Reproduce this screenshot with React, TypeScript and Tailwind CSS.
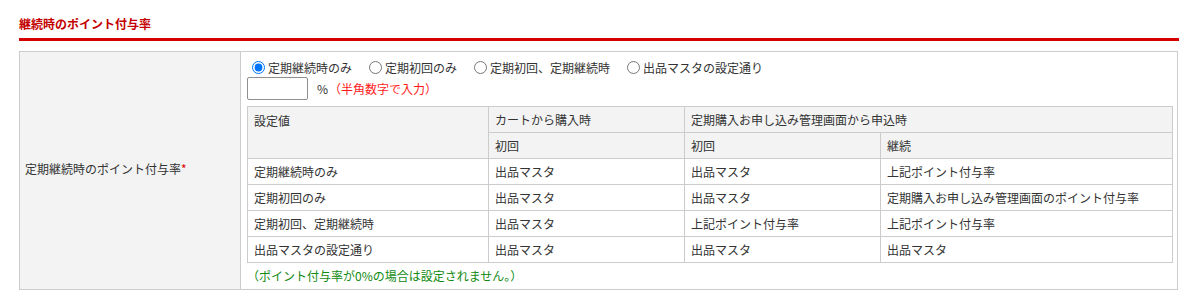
import { useState } from 'react';

const options = ['定期継続時のみ', '定期初回のみ', '定期初回、定期継続時', '出品マスタの設定通り'];

const rows = [
    ['定期継続時のみ', '出品マスタ', '出品マスタ', '上記ポイント付与率'],
    ['定期初回のみ', '出品マスタ', '出品マスタ', '定期購入お申し込み管理画面のポイント付与率'],
    ['定期初回、定期継続時', '出品マスタ', '上記ポイント付与率', '上記ポイント付与率'],
    ['出品マスタの設定通り', '出品マスタ', '出品マスタ', '出品マスタ'],
];

export default function App() {
    const [selected, setSelected] = useState(0);

    return (
        <div
            className="w-[1198px] h-[304px] bg-white px-[19px] pt-[16px] text-[12px] text-[#333]"
            style={{ fontFamily: '"Noto Sans CJK JP", "Liberation Sans", sans-serif' }}
        >
            {/* section heading */}
            <h2 className="text-[12px] leading-[16px] font-bold text-[#c40000] pb-[6px] border-b-[3px] border-[#d40000]">
                継続時のポイント付与率
            </h2>

            <table className="mt-[10px] w-[1159px] border-collapse table-fixed">
                <tbody>
                    <tr>
                        <th className="w-[221px] bg-[#f2f3f2] border border-[#cccccc] px-[5px] pb-[4px] text-left align-middle font-normal">
                            定期継続時のポイント付与率<span className="text-[#e00000]">*</span>
                        </th>
                        <td className="border border-[#cccccc] px-[6px] pt-[6px] align-top">
                            <div className="flex items-center h-[19px] leading-[19px]">
                                {options.map((label, i) => (
                                    <label key={label} className="flex items-center mr-[12px]">
                                        <input
                                            type="radio"
                                            name="pointRate"
                                            checked={selected === i}
                                            onChange={() => setSelected(i)}
                                            className="m-0 ml-[5px] mr-[3px] w-[13px] h-[13px] accent-[#0075ff]"
                                        />
                                        {label}
                                    </label>
                                ))}
                            </div>
                            <div className="flex items-center h-[23px]">
                                <input
                                    type="text"
                                    className="w-[61px] h-[23px] border border-[#8f8f8f] rounded-[2px] px-1 outline-none"
                                />
                                <span className="ml-[9px]">%</span>
                                <span className="ml-[1px] text-[#ff1a1a]">（半角数字で入力）</span>
                            </div>

                            <table className="mt-[6px] w-[925px] border-collapse table-fixed">
                                <colgroup>
                                    <col className="w-[241px]" />
                                    <col className="w-[196px]" />
                                    <col className="w-[196px]" />
                                    <col className="w-[292px]" />
                                </colgroup>
                                <thead>
                                    <tr className="h-[26px] bg-[#f2f3f2]">
                                        <th rowSpan={2} className="border border-[#cccccc] px-[6px] pt-[5px] text-left align-top font-normal">
                                            設定値
                                        </th>
                                        <th className="border border-[#cccccc] px-[6px] text-left font-normal">カートから購入時</th>
                                        <th colSpan={2} className="border border-[#cccccc] px-[6px] text-left font-normal">
                                            定期購入お申し込み管理画面から申込時
                                        </th>
                                    </tr>
                                    <tr className="h-[26px] bg-[#f2f3f2]">
                                        <th className="border border-[#cccccc] px-[6px] text-left font-normal">初回</th>
                                        <th className="border border-[#cccccc] px-[6px] text-left font-normal">初回</th>
                                        <th className="border border-[#cccccc] px-[6px] text-left font-normal">継続</th>
                                    </tr>
                                </thead>
                                <tbody>
                                    {rows.map((row) => (
                                        <tr key={row[0]} className="h-[26px]">
                                            {row.map((cell, j) => (
                                                <td key={j} className="border border-[#cccccc] px-[6px] whitespace-nowrap">
                                                    {cell}
                                                </td>
                                            ))}
                                        </tr>
                                    ))}
                                </tbody>
                            </table>
                            <p className="h-[26px] leading-[26px] text-[#108a10]">（ポイント付与率が0%の場合は設定されません。）</p>
                        </td>
                    </tr>
                </tbody>
            </table>
        </div>
    );
}
